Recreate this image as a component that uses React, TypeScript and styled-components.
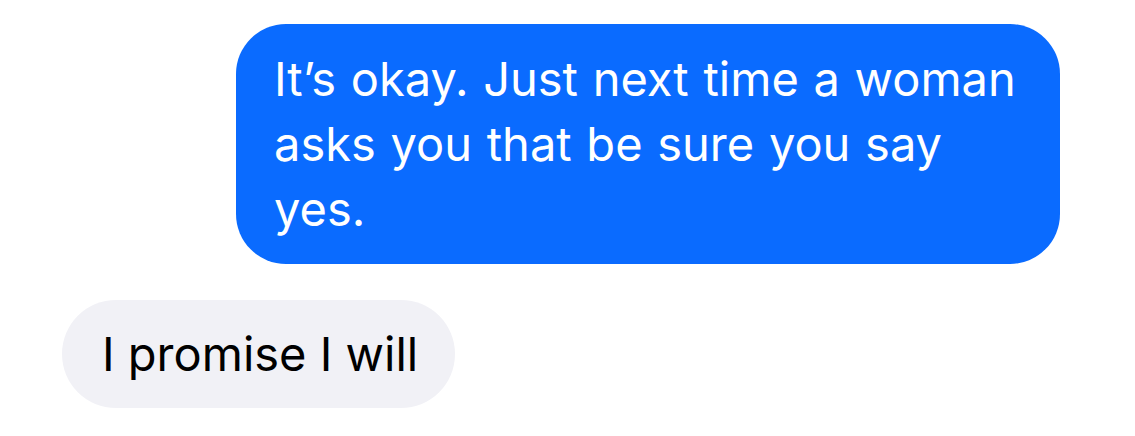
import React from 'react'
import styled, { createGlobalStyle } from 'styled-components'

const GlobalStyle = createGlobalStyle`
  body {
    margin: 0;
    background: #ffffff;
    font-family: Inter, "Noto Sans", "Liberation Sans", sans-serif;
  }
`

interface Message {
  id: number
  text: string
  mine: boolean
}

const messages: Message[] = [
  { id: 1, text: 'It’s okay. Just next time a woman asks you that be sure you say yes.', mine: true },
  { id: 2, text: 'I promise I will', mine: false },
]

function App() {
  return (
    <>
      <GlobalStyle />
      <Thread>
        {messages.map((m) => (
          <Row key={m.id} $mine={m.mine}>
            <Bubble $mine={m.mine}>{m.text}</Bubble>
          </Row>
        ))}
      </Thread>
    </>
  )
}

const Thread = styled.div`
  display: flex;
  flex-direction: column;
  gap: 36px;
  padding: 24px 75px 0 62px;
`

const Row = styled.div<{ $mine: boolean }>`
  display: flex;
  justify-content: ${({ $mine }) => ($mine ? 'flex-end' : 'flex-start')};
`

const Bubble = styled.div<{ $mine: boolean }>`
  box-sizing: border-box;
  max-width: 824px;
  padding: ${({ $mine }) => ($mine ? '22px 38px 23px 38px' : '21px 37px 22px 40px')};
  border-radius: ${({ $mine }) => ($mine ? '50px' : '54px')};
  background: ${({ $mine }) => ($mine ? '#0a6bff' : '#f1f1f6')};
  color: ${({ $mine }) => ($mine ? '#ffffff' : '#000000')};
  font-size: 47px;
  line-height: 65px;
  letter-spacing: 0;
  word-spacing: ${({ $mine }) => ($mine ? '1.5px' : '0')};
`

export default App
